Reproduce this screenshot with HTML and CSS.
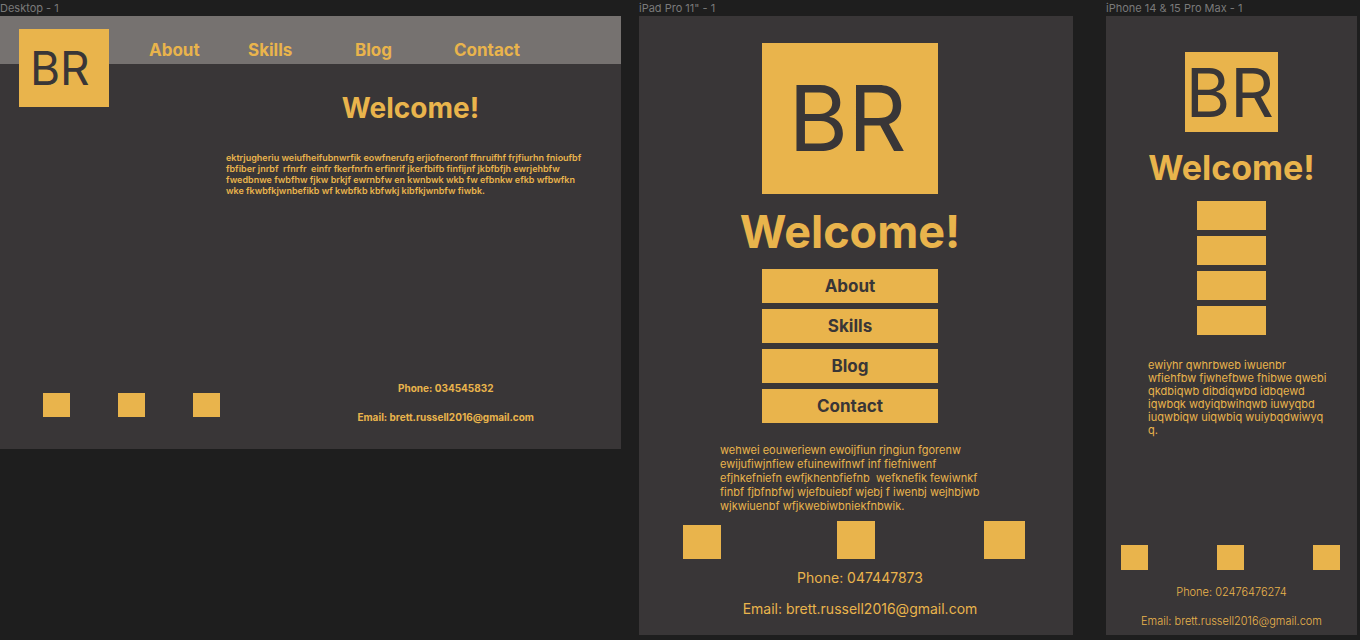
FILE: index.html
```html
<!DOCTYPE html>
<html lang="en">
<head>
<meta charset="utf-8">
<meta name="viewport" content="width=device-width, initial-scale=1">
<title>BR layouts</title>
<link rel="stylesheet" href="styles.css">
</head>
<body>
<main class="canvas">
  <section class="artboard">
    <h2 class="label">Desktop - 1</h2>
    <div class="frame desktop">
      <header class="topbar">
        <div class="logo">BR</div>
        <nav class="menu">
          <a href="#about">About</a>
          <a href="#skills">Skills</a>
          <a href="#blog">Blog</a>
          <a href="#contact">Contact</a>
        </nav>
      </header>
      <h1 class="welcome">Welcome!</h1>
      <p class="copy">ektrjugheriu weiufheifubnwrfik eowfnerufg erjiofneronf ffnruifhf frjfiurhn fnioufbf
fbfiber jnrbf  rfnrfr  einfr fkerfnrfn erfinrif jkerfbifb finfijnf jkbfbfjh ewrjehbfw
fwedbnwe fwbfhw fjkw brkjf ewrnbfw en kwnbwk wkb fw efbnkw efkb wfbwfkn
wke fkwbfkjwnbefikb wf kwbfkb kbfwkj kibfkjwnbfw fiwbk.</p>
      <footer class="footer">
        <div class="socials"><span class="tile"></span><span class="tile"></span><span class="tile"></span></div>
        <address class="contact">
          <span>Phone: 034545832</span>
          <span>Email: brett.russell2016@gmail.com</span>
        </address>
      </footer>
    </div>
  </section>

  <section class="artboard">
    <h2 class="label">iPad Pro 11" - 1</h2>
    <div class="frame tablet">
      <div class="intro">
        <div class="logo">BR</div>
        <h1 class="welcome">Welcome!</h1>
        <nav class="menu">
          <a href="#about">About</a>
          <a href="#skills">Skills</a>
          <a href="#blog">Blog</a>
          <a href="#contact">Contact</a>
        </nav>
      </div>
      <p class="copy">wehwei eouweriewn ewoijfiun rjngiun fgorenw
ewijufiwjnfiew efuinewifnwf inf fiefniwenf
efjhkefniefn ewfjkhenbfiefnb  wefknefik fewiwnkf
finbf fjbfnbfwj wjefbuiebf wjebj f iwenbj wejhbjwb
wjkwiuenbf wfjkwebiwbniekfnbwik.</p>
      <div class="socials"><span class="tile tile-short"></span><span class="tile"></span><span class="tile tile-wide"></span></div>
      <address class="contact">
        <span>Phone: 047447873</span>
        <span>Email: brett.russell2016@gmail.com</span>
      </address>
    </div>
  </section>

  <section class="artboard artboard-last">
    <h2 class="label">iPhone 14 &amp; 15 Pro Max - 1</h2>
    <div class="frame phone">
      <div class="logo">BR</div>
      <h1 class="welcome">Welcome!</h1>
      <nav class="menu">
        <a href="#about" aria-label="About"></a>
        <a href="#skills" aria-label="Skills"></a>
        <a href="#blog" aria-label="Blog"></a>
        <a href="#contact" aria-label="Contact"></a>
      </nav>
      <p class="copy">ewiyhr qwhrbweb iwuenbr
wfiehfbw fjwhefbwe fhibwe qwebi
qkdbiqwb dibdiqwbd idbqewd
iqwbqk wdyiqbwihqwb iuwyqbd
iuqwbiqw uiqwbiq wuiybqdwiwyq
q.</p>
      <div class="socials"><span class="tile"></span><span class="tile"></span><span class="tile"></span></div>
      <address class="contact">
        <span>Phone: 02476476274</span>
        <span>Email: brett.russell2016@gmail.com</span>
      </address>
    </div>
  </section>
</main>
</body>
</html>
```

FILE: styles.css
```css
:root {
  --gold: #e9b44c;
  --ink: #393637;
  --canvas: #1e1e1e;
}

* { box-sizing: border-box; }

body {
  margin: 0;
  background: var(--canvas);
  color: var(--gold);
  font-family: Inter, "Liberation Sans", sans-serif;
}

h1, h2, p { margin: 0; }
a { color: inherit; text-decoration: none; }

.canvas {
  display: grid;
  grid-template-columns: 621fr 434fr 266fr;
  column-gap: 18px;
  align-items: start;
  padding-right: 3px;
  padding-bottom: 5px;
}

.artboard { min-width: 0; }
.artboard-last { padding-left: 15px; }

.label {
  color: #7a7a7a;
  font-size: 11px;
  font-weight: 400;
  line-height: 16px;
  white-space: nowrap;
}

.frame {
  display: flex;
  flex-direction: column;
  background: var(--ink);
}

.logo {
  background: var(--gold);
  color: var(--ink);
  text-align: center;
}

.welcome { font-weight: 700; text-align: center; }
.copy { white-space: pre; }
.tile { background: var(--gold); }

.contact {
  display: flex;
  flex-direction: column;
  align-items: center;
  font-style: normal;
}

/* Desktop */
.desktop { padding-bottom: 17px; }

.desktop .topbar {
  display: flex;
  align-items: flex-start;
  gap: 40px;
  height: 48px;
  padding: 13px 0 0 19px;
  background: #767270;
}

.desktop .logo {
  flex: none;
  width: 90px;
  padding-left: 11px;
  font-size: 46px;
  line-height: 78px;
  text-align: left;
}

.desktop .menu {
  flex: 1;
  display: grid;
  grid-template-columns: 99fr 107fr 99fr 167fr;
  padding-top: 10px;
  font-size: 17px;
  font-weight: 700;
  line-height: 22px;
}

.desktop .welcome {
  margin-top: 26px;
  padding-left: 200px;
  font-size: 28px;
  line-height: 36px;
}

.desktop .copy {
  margin-top: 26px;
  padding-left: 226px;
  font-size: 9px;
  font-weight: 600;
  line-height: 11px;
}

.desktop .footer {
  display: flex;
  align-items: flex-start;
  margin-top: 178px;
  padding: 0 87px 0 43px;
}

.desktop .socials {
  display: flex;
  gap: 48px;
  padding-top: 19px;
}

.desktop .tile { width: 27px; height: 24px; }

.desktop .contact {
  margin-left: auto;
  font-size: 10px;
  font-weight: 700;
  line-height: 29px;
}

/* Tablet */
.tablet { padding: 27px 0 11px; }

.tablet .intro {
  display: flex;
  flex-direction: column;
  align-items: center;
  padding-right: 12px;
}

.tablet .logo {
  width: 176px;
  padding-right: 5px;
  font-size: 91px;
  line-height: 151px;
}

.tablet .welcome {
  margin: 10px 0 9px;
  font-size: 45px;
  line-height: 56px;
}

.tablet .menu {
  display: grid;
  gap: 6px;
  width: 176px;
}

.tablet .menu a {
  background: var(--gold);
  color: var(--ink);
  font-size: 17px;
  font-weight: 700;
  line-height: 34px;
  text-align: center;
}

.tablet .copy {
  margin: 20px 0 8px;
  padding-left: 81px;
  font-size: 11px;
  line-height: 14px;
}

.tablet .socials {
  display: grid;
  grid-template-columns: 154fr 147fr 41px;
  align-items: end;
  padding: 0 48px 0 44px;
}

.tablet .tile { width: 38px; height: 38px; }
.tablet .tile-short { height: 34px; }
.tablet .tile-wide { width: 41px; }

.tablet .contact {
  margin-top: 3px;
  padding-left: 8px;
  font-size: 14px;
  line-height: 31px;
}

/* Phone */
.phone { padding: 36px 0 6px; }

.phone .logo {
  align-self: center;
  width: 93px;
  padding-right: 3px;
  font-size: 68px;
  line-height: 80px;
}

.phone .welcome {
  margin: 15px 0 12px;
  font-size: 34px;
  line-height: 42px;
}

.phone .menu {
  display: grid;
  grid-auto-rows: 29px;
  gap: 6px;
  width: 69px;
  align-self: center;
}

.phone .menu a { background: var(--gold); }

.phone .copy {
  margin: 24px 0 108px;
  padding-left: 42px;
  font-size: 11px;
  line-height: 13px;
}

.phone .socials {
  display: flex;
  justify-content: space-between;
  padding: 0 17px 0 15px;
}

.phone .tile { width: 27px; height: 25px; }

.phone .contact {
  gap: 13px;
  margin-top: 14px;
  font-size: 11px;
  font-weight: 300;
  line-height: 16px;
}
```
